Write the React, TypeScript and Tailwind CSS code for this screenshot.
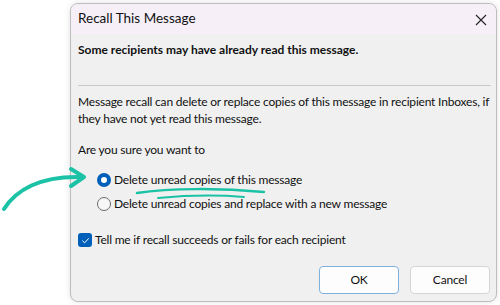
import React from "react";

const font = { fontFamily: 'Lato, "Noto Sans", sans-serif' };

export default function App() {
  return (
    <div className="relative w-[500px] h-[305px] bg-white overflow-hidden" style={font}>
      <div className="pl-[70px] pt-[3px]">
        <div className="w-[427px] h-[299px] rounded-[8px] border border-[#bdbdbd] bg-[#f0f0f0] flex flex-col overflow-hidden shadow-[0_0_6px_rgba(0,0,0,0.12)]">
          <div className="h-[30px] shrink-0 bg-[#f6eff8] flex items-center justify-between pl-[7px] pr-[9px]">
            <span className="text-[13.5px] text-[#111] leading-none">Recall This Message</span>
            <svg width="12" height="12" viewBox="0 0 12 12" className="mt-[2px]">
              <path d="M1 1 L11 11 M11 1 L1 11" stroke="#222" strokeWidth="1.1" />
            </svg>
          </div>
          <div className="flex flex-col pl-[7px] pr-[2px] text-[12px] text-[#111] tracking-[-0.2px]">
            <div className="mt-[8px] h-[16px] leading-[16px] font-bold tracking-normal">Some recipients may have already read this message.</div>
            <div className="mt-[27px] h-px bg-[#c9c9c9] mr-[3px]" />
            <div className="mt-[7px] leading-[17px] whitespace-nowrap">
              <div>Message recall can delete or replace copies of this message in recipient Inboxes, if</div>
              <div>they have not yet read this message.</div>
            </div>
            <div className="mt-[14px] leading-[17px]">Are you sure you want to</div>
            <div className="mt-[12px] ml-[19px] flex flex-col gap-[4px]">
              <div className="h-[20px] flex items-center gap-[3px]">
                <span className="w-[14px] h-[14px] rounded-full bg-[#005fb8] flex items-center justify-center">
                  <span className="w-[6px] h-[6px] rounded-full bg-white" />
                </span>
                <span>Delete unread copies of this message</span>
              </div>
              <div className="h-[20px] flex items-center gap-[3px]">
                <span className="w-[14px] h-[14px] rounded-full border border-[#6b6b6b] bg-[#f7f7f7]" />
                <span>Delete unread copies and replace with a new message</span>
              </div>
            </div>
            <div className="mt-[16px] h-[20px] flex items-center gap-[3px]">
              <span className="w-[14px] h-[14px] rounded-[3px] bg-[#005fb8] flex items-center justify-center">
                <svg width="9" height="9" viewBox="0 0 10 10">
                  <path d="M1.5 5.2 L4 7.6 L8.6 2.6" stroke="white" strokeWidth="1.1" fill="none" />
                </svg>
              </span>
              <span>Tell me if recall succeeds or fails for each recipient</span>
            </div>
            <div className="mt-[16px] flex justify-end gap-[11px] pr-[4px]">
              <button className="w-[80px] h-[28px] rounded-[4px] bg-[#fdfdfd] border border-[#7eb0de] text-[12px] text-[#111]">OK</button>
              <button className="w-[80px] h-[28px] rounded-[4px] bg-[#fdfdfd] border border-[#d5d5d5] text-[12px] text-[#111]">Cancel</button>
            </div>
          </div>
        </div>
      </div>
      <svg className="absolute left-0 top-0 pointer-events-none" width="500" height="305" viewBox="0 0 500 305">
        <path d="M4 209 C 16 190, 40 176, 80 177" stroke="#1cc2a5" strokeWidth="4" fill="none" strokeLinecap="round" />
        <path d="M71 169 L84 177 L71 186" stroke="#1cc2a5" strokeWidth="4" fill="none" strokeLinecap="round" strokeLinejoin="round" />
        <path d="M137 193 C 170 188, 220 188, 264 192" stroke="#1cc2a5" strokeWidth="2.5" fill="none" strokeLinecap="round" />
        <path d="M158 198 C 190 195, 220 195, 244 197" stroke="#1cc2a5" strokeWidth="2" fill="none" strokeLinecap="round" />
      </svg>
    </div>
  );
}
